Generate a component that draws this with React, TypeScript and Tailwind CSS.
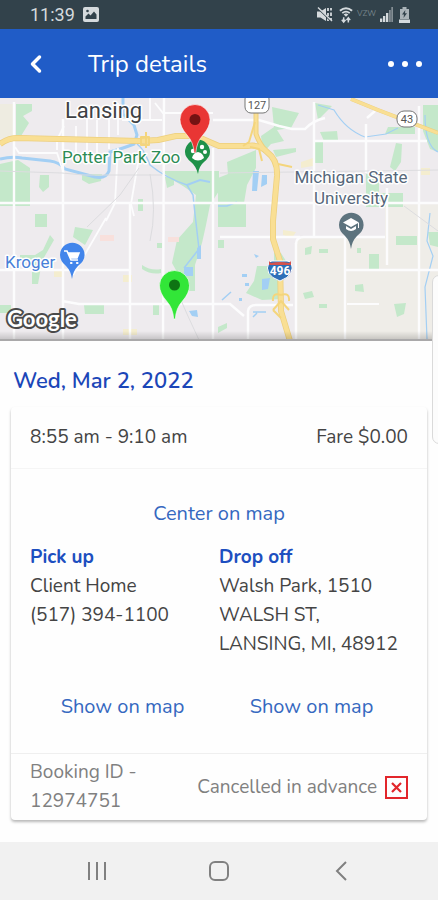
import React from 'react';
import { ChevronLeft } from 'lucide-react';

interface Stop {
  title: string;
  lines: string[];
}

const stops: Stop[] = [
  { title: 'Pick up', lines: ['Client Home', '(517) 394-1100'] },
  { title: 'Drop off', lines: ['Walsh Park, 1510', 'WALSH ST,', 'LANSING, MI, 48912'] },
];

function StatusBar() {
  return (
    <div className="flex h-[29px] items-center justify-between bg-[#32424b] pr-7 pl-[30px] text-[#d5dadd]">
      <div className="flex items-center gap-2">
        <span className="font-['Roboto',sans-serif] text-[18px] leading-none">11:39</span>
        <svg width="16" height="15" viewBox="0 0 16 15">
          <rect width="16" height="15" rx="2" fill="#d5dadd" />
          <path d="M2.500 12V9.500l3-3 2 2 3.500-4 2.500 3V12z" fill="#32424b" />
          <circle cx="4.500" cy="4" r="1.300" fill="#32424b" />
        </svg>
      </div>
      <div className="flex items-center gap-1.5">
        <svg width="17" height="17" viewBox="0 0 17 17" fill="none" stroke="#d5dadd">
          <path d="M1 5.500h3.500L10 2v13L4.500 11.500H1z" fill="#d5dadd" stroke="none" />
          <path d="M12 2v3M12 7v3M12 12v3M15 2v2.500M15 6.500v3.500M15 12v2.500" strokeWidth="1.800" />
          <path d="M1 1.500 15 15" stroke="#32424b" strokeWidth="1.600" />
          <path d="M2 1.500 16 15" strokeWidth="1.400" />
        </svg>
        <svg width="14" height="18" viewBox="0 0 15 18" fill="none" stroke="#d5dadd">
          <path d="M1 4.500Q7.500-1 14 4.500" strokeWidth="2.200" />
          <path d="M3.500 7Q7.500 3.800 11.500 7" strokeWidth="2" />
          <path d="M5 8.500Q7.500 6.500 10 8.500L7.500 11z" fill="#d5dadd" stroke="none" />
          <path d="M5 11.500v4M3 14l2 2.500L7 14M10 17v-4M8 14.500l2-2.500 2 2.500" strokeWidth="1.600" />
        </svg>
        <span className="-mx-0.5 self-start pt-1 text-[8px] leading-none text-[#75838a]">VZW</span>
        <svg width="13" height="15" viewBox="0 0 13 15" fill="#d5dadd">
          <path d="M0 11.500h2.300V15H0zM3 9h2.300v6H3zM6 6h2.300v9H6z" />
          <path d="M9 3h1.800v12H9zM11.300 0H13v15h-1.700z" opacity=".5" />
        </svg>
        <svg width="11" height="16" viewBox="0 0 11 16">
          <path d="M3.500 0h4v2H10v10H1V2h2.500z" fill="#aab3b8" />
          <path d="M0 12.500h11V16H0z" fill="#d5dadd" />
          <path d="M6.300 3 3 7.500h2L4.500 11 8 6.300H6z" fill="#32424b" />
        </svg>
      </div>
    </div>
  );
}

function Header() {
  return (
    <header className="flex h-[69px] items-center bg-[#205cc7] pr-3 pl-5 text-white">
      <button type="button" aria-label="Back" className="flex h-10 w-8 items-center justify-center">
        <ChevronLeft className="h-7 w-7" strokeWidth={3} />
      </button>
      <h1 className="ml-9 flex-1 text-[24px] leading-8">Trip details</h1>
      <button type="button" aria-label="More options" className="flex h-10 items-center gap-2 pl-1">
        <span className="h-1.5 w-1.5 rounded-full bg-white" />
        <span className="h-1.5 w-1.5 rounded-full bg-white" />
        <span className="mr-1 h-1.5 w-1.5 rounded-full bg-white" />
      </button>
    </header>
  );
}

function TripMap() {
  return (
    <svg
      className="block h-[241px] w-full font-['Roboto',sans-serif]"
      viewBox="0 0 438 243"
      preserveAspectRatio="xMidYMin slice"
    >
      <defs>
        <linearGradient id="mapShade" x1="0" y1="0" x2="0" y2="1">
          <stop offset="0" stopColor="#000" stopOpacity="0" />
          <stop offset="1" stopColor="#000" stopOpacity=".16" />
        </linearGradient>
      </defs>
      <rect width="438" height="243" fill="#eeebee" />
      <path d="M296 145q0-6 7-6h82V105h53v138H296z" fill="#efede8" />
      <path d="M0 6h15v34H0z" fill="#eeece1" />

      {/* parks */}
      <g fill="#c4e8ca">
        <path d="M16 6h16v7l-9 5 6 7-8 13h-5zM0 66l18-4 12 8v38H0zM82 76h20l-1 7-12 3-7-4z" />
        <path d="M40 77h9v12l-6 5-4-5zM35 116h12v13H35zM138 101h5v12h-5zM75 129l18 3-8 15-12-8z" />
        <path d="M50 137l4 5-12 21-4 23h-6v-22l-12-2v-5h15l8-5z" />
        <path d="M162 73h57v20l-9 14-4 20-4 18-7 22v26h-13v-10l-10-18 5-23 16-18 3-27-13-9-12-7z" />
        <path d="M165 79h9v8l-7 3zM0 207h11v8H0zM84 207h20v9H85zM153 207h6v10h-6zM142 167q9 6 19 4v4q-10 2-19-4z" />
        <path d="M157 145h5v5h-5z" />
        <path d="M272 9l27 6-8 15-14 2 7 11-13 3-8 9-2-17 13-9zM273 52l23-2v4l-20 5zM227 64l29-12v18l-9 17-3 18h-26V80l10-4z" />
        <path d="M218 105h28v24h-28zM315 5l17 3-14 14zM313 44h10v21h-9zM320 34l17-1 1 9-14 1zM388 29h27v7h-30z" />
        <path d="M423 7h15v47l-8-3-7-18zM396 45l6 1-1 18-6 9-5-4zM366 76h13v19h24v14h-37z" />
        <path d="M257 168h16l9 3v30l-20 1-16-7 8-12zM274 155h7l5 8-6 5-6-5z" />
        <path d="M305 150l7-2-1 8-6 1zM319 151h9v4h-9zM396 138h21v9h-21zM369 156h10v15h-10zM355 187l8-1 1 8-9-1zM303 195l9-2 2 6-9 2zM319 206h8v4h-8zM394 206l12-1-2 11-7 3zM357 150h4v5h-4z" />
        <path d="M218 142h6v8h-6zM218 229l9-4v5l-9 5zM428 134h10v15l-8-2z" />
      </g>

      <g fill="#f4edcf">
        <path d="M301 64l12-4v8l-12 2zM421 70h9v7h-9zM283 132l13 2-4 6-9-3zM54 171h9v8h-9zM123 177h9v7h-9zM123 231h14v6h-14z" />
      </g>
      <path d="M100 137h14v6h-14zM168 139h11v5h-11z" fill="#f8e0dc" />

      {/* water */}
      <g fill="none" stroke="#a3cff4">
        <path d="M0 61Q12 58 22 60L50 63Q59 64 65 71L80 75 95 79Q106 81 109 73L110 54Q124 50 134 46L137 37 134 27 123 16V0" strokeWidth="3" />
        <path d="M137 46Q144 51 150 67Q166 80 187 87L193 97 195 116 199 151 184 170" strokeWidth="1.500" />
        <path d="M187 87l13-5 10 2" strokeWidth="2" />
        <path d="M318 7L334 12Q346 32 365 39L386 36 398 30" strokeWidth="1.200" />
        <path d="M425 17Q425 48 438 54M430 115l-3 28 6 15-8 31 2 52" strokeWidth="1.200" />
        <path d="M222 202l9-8M253 214h13M253 219l4-4M218 108h9l10-4" strokeWidth="1.500" />
      </g>
      <g fill="#a3cff4">
        <path d="M253 73h6l-2 20h-5zM262 77h5v9l-6 3zM262 181l8-1-2 11-6 1zM242 176h5v3h-5zM245 185h4v3h-4zM239 200h3v3h-3zM254 156l5 2-3 2zM184 169h9v9h-9zM197 150l4-3v14h-4zM189 213l8-1 1 7-6-1z" />
      </g>

      {/* streets */}
      <g fill="none" stroke="#fcfcfd" strokeWidth="2.400">
        <path d="M14 4v239M63 21v222M130 105v138M164 0l-1 243M314 4v134M366 26v49M367 20l8-7M419 8v235M345 136v107M387 90v77M213 50v193M296 145v98" />
        <path d="M0 105h438M0 172h130M62 203l17 3h139M304 139h81M346 172h92M213 22h46l20 6 13 3h13q7-8 20-11" />
        <path d="M313 43h114M218 206h12l14 12M248 243v-30q1-6 8-6h37M296 146q0-7 8-7M220 139h80" />
        <path d="M15 49l4 6h38l7 21M57 52v-10l7-14M76 28v30M87 19v40M97 22v33M109 19v32M118 5v32M122 22h40M155 5l8 10h50M106 120l-33 57M118 50l-3 55-9 18M150 0v22M140 53l-9 53 3 12M347 206h32" strokeWidth="1.800" />
      </g>
      <g fill="none" stroke="#dcdcdf" strokeWidth="1">
        <path d="M0 73l62 2 22 2h78M139 70l-19 27-33 32M150 76q7 37 0 67M220 75l220-3M180 200l7 16 12 26M404 108l34 25" />
      </g>

      {/* freeways */}
      <g fill="none" strokeLinejoin="round">
        <g stroke="#edcf7d" strokeWidth="6">
          <path d="M0 46Q8 40 18 40L140 43 158 42 176 38 196 38 219 48H247Q260 46 267 54Q278 62 277 78L273 123V141L280 163 281 213 290 243" />
          <path d="M256 12V36Q259 45 266 53" strokeWidth="5" />
          <path d="M351 1L378 12 438 35" strokeWidth="4" />
        </g>
        <g stroke="#f9df94" strokeWidth="4.500">
          <path d="M0 46Q8 40 18 40L140 43 158 42 176 38 196 38 219 48H247Q260 46 267 54Q278 62 277 78L273 123V141L280 163 281 213 290 243" />
          <path d="M256 12V36Q259 45 266 53" strokeWidth="3" />
          <path d="M351 1L378 12 438 35" strokeWidth="3" />
        </g>
        <path d="M255 24l-6 20-6 4M250 49l9 2 3 12M278 66l14 3M146 34v16M141 39h8v8h-8zM281 197q-9-3-8 6M273 212l8-9 8 9M281 197q9-3 8 6M273 212l8 8" stroke="#f4d57c" strokeWidth="2" />
      </g>

      {/* route shields */}
      <rect x="245" y="-5" width="24" height="20" rx="6" fill="#fff" stroke="#777" />
      <text x="257" y="11" textAnchor="middle" fontSize="11" fill="#555">127</text>
      <rect x="397" y="13" width="20" height="16" rx="7" fill="#fff" stroke="#777" />
      <text x="407" y="25" textAnchor="middle" fontSize="11" fill="#555">43</text>
      <path d="M269 164l3-1h15l4 1q5 13-11 19-17-6-11-19z" fill="#2e6fb7" stroke="#fff" />
      <path d="M269 163l2 2q9-2 18 0l2-2v4h-22z" fill="#d5524c" />
      <text x="280" y="177" textAnchor="middle" fontSize="12" fontWeight="700" fill="#fff">496</text>

      {/* place labels */}
      <g stroke="#fff" strokeWidth="3" strokeLinejoin="round" paintOrder="stroke" fontSize="17">
        <text x="65" y="20" fontSize="22" fill="#3e4144">Lansing</text>
        <text x="62" y="65" fill="#2c8c55">Potter Park Zoo</text>
        <text x="351" y="85" textAnchor="middle" fill="#56677a">Michigan State</text>
        <text x="351" y="106" textAnchor="middle" fill="#56677a">University</text>
        <text x="5" y="170" fill="#4780d8">Kroger</text>
      </g>

      {/* place pins */}
      <path d="M198 76q-2-8-7-12-6-5-6-10a12.500 12.500 0 0 1 25 0q0 5-6 10-5 4-6 12z" fill="#1f9149" />
      <g fill="#fff">
        <path d="M198 54q5 1 6 6-6 5-12 0 1-5 6-6z" />
        <circle cx="193" cy="53" r="2.200" />
        <circle cx="202" cy="49" r="2.200" />
        <circle cx="205" cy="54" r="2" />
      </g>
      <path d="M72 181q-1-8-6-13-6-5-6-11a12.300 12.300 0 0 1 24.600 0q0 6-6.600 11-5 5-6 13z" fill="#4285eb" />
      <g fill="none" stroke="#fff" strokeWidth="1.600">
        <path d="M64 153h3l4 9h7" />
        <path d="M69 155h10l-2 5h-6z" fill="#fff" />
        <path d="M71 165h.500M77 165h.500" strokeLinecap="round" strokeWidth="2.200" />
      </g>
      <path d="M351 151q-1-8-6-13-6-5-6-11a12.300 12.300 0 0 1 24.600 0q0 6-6.600 11-5 5-6 13z" fill="#5d737e" />
      <path d="M351 120l8 4.500-8 4.500-8-4.500zM346 128l5 3 5-3v3q-5 4-10 0z" fill="#fff" />
      <path d="M358.500 125v5" stroke="#fff" />

      {/* trip pins */}
      <path d="M194.200 55q-.700-11-7.200-18-7-8-7-15.500a15 15 0 0 1 30 0q0 7.500-7 15.500-6.500 7-7.200 18z" fill="#e93634" stroke="#fff" strokeOpacity=".6" />
      <circle cx="195" cy="21.500" r="5.500" fill="#751313" />
      <path d="M173.700 221q-.700-11-7.200-18-7-8-7-15.500a15 15 0 0 1 30 0q0 7.500-7 15.500-6.500 7-7.200 18z" fill="#32e638" stroke="#fff" strokeOpacity=".6" />
      <circle cx="174.500" cy="187" r="5.500" fill="#0e7413" />

      <text x="7" y="229" fontFamily="Lato, sans-serif" fontSize="22" fontWeight="700" fill="#fff" stroke="#4a4a4a" strokeWidth="4" strokeLinejoin="round" paintOrder="stroke">
        Google
      </text>
      <rect y="233" width="438" height="8" fill="url(#mapShade)" />
    </svg>
  );
}

function StopColumn({ stop }: { stop: Stop }) {
  return (
    <section className="flex flex-col pr-1">
      <h3 className="font-bold text-[#1d4fc0]">{stop.title}</h3>
      {stop.lines.map((line) => (
        <p key={line} className="whitespace-nowrap">{line}</p>
      ))}
      <button type="button" className="mt-auto h-10 text-[20px] text-[#3568c0]">Show on map</button>
    </section>
  );
}

function TripCard() {
  return (
    <article className="mx-[11px] rounded bg-[#fefefe] text-[19px] leading-[29px] text-[#444] shadow-[0_2px_3px_rgba(0,0,0,0.28)]">
      <div className="flex items-center justify-between border-b border-[#f5f5f5] px-[19px] py-4">
        <span>8:55 am - 9:10 am</span>
        <span>Fare $0.00</span>
      </div>
      <div className="px-[19px] pt-6 pb-[27px]">
        <button type="button" className="mx-auto block h-10 text-[20px] text-[#3568c0]">Center on map</button>
        <div className="mt-[10px] grid min-h-[183px] grid-cols-2">
          {stops.map((stop) => (
            <StopColumn key={stop.title} stop={stop} />
          ))}
        </div>
      </div>
      <footer className="flex items-center justify-between border-t border-[#efefef] px-[19px] py-1 text-[#808080]">
        <p>
          Booking ID -<br />
          12974751
        </p>
        <p className="flex items-center gap-2">
          Cancelled in advance
          <svg width="23" height="23" viewBox="0 0 23 23" fill="none" stroke="#e2262b">
            <rect x="1" y="1" width="21" height="21" strokeWidth="2" />
            <path d="M7 7l9 9M16 7l-9 9" strokeWidth="2.200" />
          </svg>
        </p>
      </footer>
    </article>
  );
}

function NavigationBar() {
  return (
    <nav className="mt-auto grid h-[58px] grid-cols-3 bg-[#f1f1f1] px-9 text-[#808080]">
      <button type="button" aria-label="Recent apps" className="flex items-center justify-center">
        <svg width="20" height="20" viewBox="0 0 20 20" stroke="currentColor" strokeWidth="2">
          <path d="M2 1v18M10 1v18M18 1v18" />
        </svg>
      </button>
      <button type="button" aria-label="Home" className="flex items-center justify-center">
        <svg width="22" height="22" viewBox="0 0 22 22" fill="none" stroke="currentColor" strokeWidth="2">
          <rect x="2" y="2" width="18" height="18" rx="5" />
        </svg>
      </button>
      <button type="button" aria-label="Back" className="flex items-center justify-center">
        <svg width="12" height="20" viewBox="0 0 12 20" fill="none" stroke="currentColor" strokeWidth="2">
          <path d="M11 1 2 10l9 9" />
        </svg>
      </button>
    </nav>
  );
}

function App() {
  return (
    <div className="relative flex min-h-screen flex-col overflow-hidden bg-[#fefefe] font-['Nunito','Lato',sans-serif]">
      <StatusBar />
      <Header />
      <main>
        <div className="border-b-2 border-[#aaa9aa]">
          <TripMap />
        </div>
        <h2 className="px-[13px] pt-6 pb-[10px] text-[22px] leading-8 font-semibold text-[#1b46b8]">
          Wed, Mar 2, 2022
        </h2>
        <TripCard />
      </main>
      <NavigationBar />
      {/* edge panel handle */}
      <div className="absolute top-[275px] -right-2 h-[169px] w-[14px] rounded-lg border border-[#dadada] bg-[#fcfcfc]" />
    </div>
  );
}

export default App;
